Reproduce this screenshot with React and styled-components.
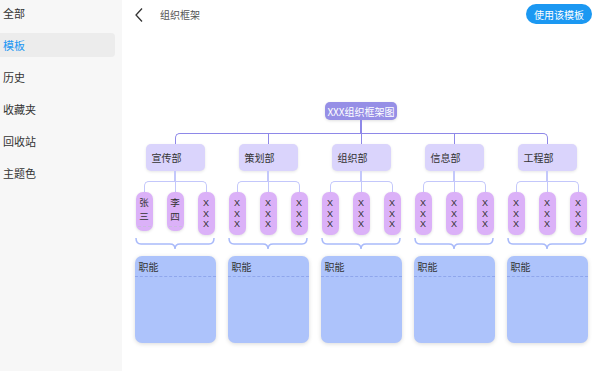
import React from "react";
import styled, { createGlobalStyle } from "styled-components";

const GlobalStyle = createGlobalStyle`
  html, body {
    margin: 0;
    padding: 0;
    background: #ffffff;
    font-family: "Noto Sans CJK SC", "Noto Sans", sans-serif;
  }
`;

const MAIN_LINE = "#8e88e8";
const SUB_LINE = "#c3c7fb";

const StyledPage = styled.div`
  display: flex;
  width: 600px;
  height: 371px;
  overflow: hidden;
`;

const StyledSidebar = styled.ul`
  width: 122px;
  margin: 0;
  padding: 1px 0 0;
  list-style-type: none;
  background-color: #f7f7f7;
  display: flex;
  flex-direction: column;
  gap: 8px;
`;

const StyledSideItem = styled.li`
  width: 115px;
  height: 24px;
  padding-left: 3px;
  box-sizing: border-box;
  display: flex;
  align-items: center;
  font-size: 11px;
  border-radius: 0 4px 4px 0;
  color: ${({ $active }) => ($active ? "#2196f3" : "#333")};
  background-color: ${({ $active }) => ($active ? "#ececec" : "transparent")};
`;

const StyledMain = styled.div`
  flex: 1;
  display: flex;
  flex-direction: column;
  background-color: #fff;
`;

const StyledHeader = styled.div`
  height: 29px;
  display: flex;
  align-items: center;
  padding: 0 8px 0 13px;
`;

const StyledBack = styled.svg`
  width: 8px;
  height: 14px;
  flex-shrink: 0;
`;

const StyledTitle = styled.span`
  margin-left: 17px;
  font-size: 10px;
  color: #555;
  flex: 1;
`;

const StyledUseButton = styled.button`
  height: 20px;
  width: 66px;
  border: none;
  border-radius: 10px;
  background-color: #1b98f2;
  color: #fff;
  font-family: inherit;
  font-size: 10px;
  padding: 0;
  margin-top: -1px;
`;

const StyledChart = styled.div`
  margin-top: 73px;
  display: flex;
  flex-direction: column;
  align-items: center;
`;

const StyledRoot = styled.div`
  width: 72px;
  height: 18px;
  border-radius: 5px;
  background-color: #968fe6;
  color: #fff;
  font-size: 10px;
  display: flex;
  align-items: center;
  justify-content: center;
  box-shadow: 0 1px 3px rgba(0, 0, 0, 0.12);
`;

const StyledStem = styled.div`
  width: 1.5px;
  height: ${({ $h }) => $h}px;
  background-color: ${({ $color }) => $color};
  margin: 0 auto;
`;

const StyledColumns = styled.div`
  display: grid;
  grid-template-columns: repeat(5, 93px);
`;

const StyledColumn = styled.div`
  display: flex;
  flex-direction: column;
  align-items: center;
`;

const StyledCells = styled.div`
  display: grid;
  grid-template-columns: repeat(${({ $n }) => $n}, ${({ $w }) => $w}px);
  align-items: start;
`;

const StyledJoint = styled.div`
  display: flex;
  height: ${({ $h }) => $h}px;
`;

const StyledHalf = styled.div`
  flex: 1;
  box-sizing: border-box;
  border-top: ${({ $top, $color }) => ($top ? `1.5px solid ${$color}` : "none")};
  border-left: ${({ $left, $color }) => ($left ? `1.5px solid ${$color}` : "none")};
  border-right: ${({ $right, $color }) => ($right ? `1.5px solid ${$color}` : "none")};
  border-top-left-radius: ${({ $round }) => ($round === "left" ? "5px" : "0")};
  border-top-right-radius: ${({ $round }) => ($round === "right" ? "5px" : "0")};
`;

const StyledDept = styled.div`
  width: 59px;
  height: 27px;
  box-sizing: border-box;
  padding-left: 6px;
  border-radius: 5px;
  background-color: #dad4fc;
  color: #333;
  font-size: 10px;
  display: flex;
  align-items: center;
  box-shadow: 0 1px 3px rgba(0, 0, 0, 0.1);
`;

const StyledPillCell = styled.div`
  display: flex;
  justify-content: center;
`;

const StyledPill = styled.div`
  position: relative;
  width: 17px;
  height: ${({ $short }) => ($short ? 39 : 43)}px;
  box-sizing: border-box;
  padding-top: ${({ $short }) => ($short ? 4 : 6)}px;
  border-radius: 7px;
  background-color: #dbb1f8;
  color: #333;
  font-family: ${({ $short }) =>
    $short ? `"Noto Sans CJK SC", sans-serif` : `"Liberation Sans", Arial, sans-serif`};
  font-size: ${({ $short }) => ($short ? 9.5 : 9)}px;
  line-height: ${({ $short }) => ($short ? 13.5 : 10.5)}px;
  display: flex;
  flex-direction: column;
  align-items: center;
  box-shadow: 0 1px 3px rgba(0, 0, 0, 0.12);

  &::after {
    content: "";
    display: ${({ $short }) => ($short ? "block" : "none")};
    position: absolute;
    left: 2px;
    right: 2px;
    bottom: 4px;
    border-top: 1px dashed rgba(200, 190, 220, 0.9);
  }
`;

const StyledBrace = styled.svg`
  width: 80px;
  height: 12px;
  margin-top: 3px;
  display: block;
`;

const StyledCard = styled.div`
  width: 81px;
  height: 87px;
  margin-top: 6px;
  border-radius: 7px;
  background-color: #adc3fb;
  box-shadow: 0 1px 4px rgba(0, 0, 0, 0.15);
`;

const StyledCardHead = styled.div`
  height: 21px;
  box-sizing: border-box;
  padding: 3px 4px 0;
  font-size: 10px;
  color: #333;
  border-bottom: 1px dashed #8fa6ec;
`;

const sideItems = ["全部", "模板", "历史", "收藏夹", "回收站", "主题色"];

const depts = [
  { name: "宣传部", members: ["张三", "李四", "XXX"] },
  { name: "策划部", members: ["XXX", "XXX", "XXX"] },
  { name: "组织部", members: ["XXX", "XXX", "XXX"] },
  { name: "信息部", members: ["XXX", "XXX", "XXX"] },
  { name: "工程部", members: ["XXX", "XXX", "XXX"] },
];

const Joint = ({ index, count, height, color }) => {
  const first = index === 0;
  const last = index === count - 1;
  return (
    <StyledJoint $h={height}>
      <StyledHalf
        $color={color}
        $top={!first}
        $right={!first}
        $round={last ? "right" : ""}
      />
      <StyledHalf
        $color={color}
        $top={!last}
        $left={first}
        $round={first ? "left" : ""}
      />
    </StyledJoint>
  );
};

const Brace = () => (
  <StyledBrace viewBox="0 0 80 12">
    <path
      d="M1 0 Q1 6 6 6 L35 6 Q40 6 40 11 Q40 6 45 6 L74 6 Q79 6 79 0"
      fill="none"
      stroke="#a9bafa"
      strokeWidth="1.5"
    />
  </StyledBrace>
);

const Column = ({ dept }) => (
  <StyledColumn>
    <StyledDept>{dept.name}</StyledDept>
    <StyledStem $h={10} $color={SUB_LINE} />
    <StyledCells $n={3} $w={31}>
      {dept.members.map((m, i) => (
        <Joint key={i} index={i} count={3} height={11} color={SUB_LINE} />
      ))}
      {dept.members.map((m, i) => (
        <StyledPillCell key={`p${i}`}>
          <StyledPill $short={m !== "XXX"}>
            {m.split("").map((ch, j) => (
              <span key={j}>{ch}</span>
            ))}
          </StyledPill>
        </StyledPillCell>
      ))}
    </StyledCells>
    <Brace />
    <StyledCard>
      <StyledCardHead>职能</StyledCardHead>
    </StyledCard>
  </StyledColumn>
);

const App = () => (
  <>
    <GlobalStyle />
    <StyledPage>
      <StyledSidebar>
        {sideItems.map((item) => (
          <StyledSideItem key={item} $active={item === "模板"}>
            {item}
          </StyledSideItem>
        ))}
      </StyledSidebar>
      <StyledMain>
        <StyledHeader>
          <StyledBack viewBox="0 0 8 14">
            <polyline
              points="7,0.5 1,7 7,13.5"
              fill="none"
              stroke="#333"
              strokeWidth="1.3"
            />
          </StyledBack>
          <StyledTitle>组织框架</StyledTitle>
          <StyledUseButton>使用该模板</StyledUseButton>
        </StyledHeader>
        <StyledChart>
          <StyledRoot>XXX组织框架图</StyledRoot>
          <StyledStem $h={13} $color={MAIN_LINE} />
          <StyledColumns>
            {depts.map((d, i) => (
              <Joint key={d.name} index={i} count={depts.length} height={11} color={MAIN_LINE} />
            ))}
            {depts.map((d) => (
              <Column key={`c${d.name}`} dept={d} />
            ))}
          </StyledColumns>
        </StyledChart>
      </StyledMain>
    </StyledPage>
  </>
);

export default App;
